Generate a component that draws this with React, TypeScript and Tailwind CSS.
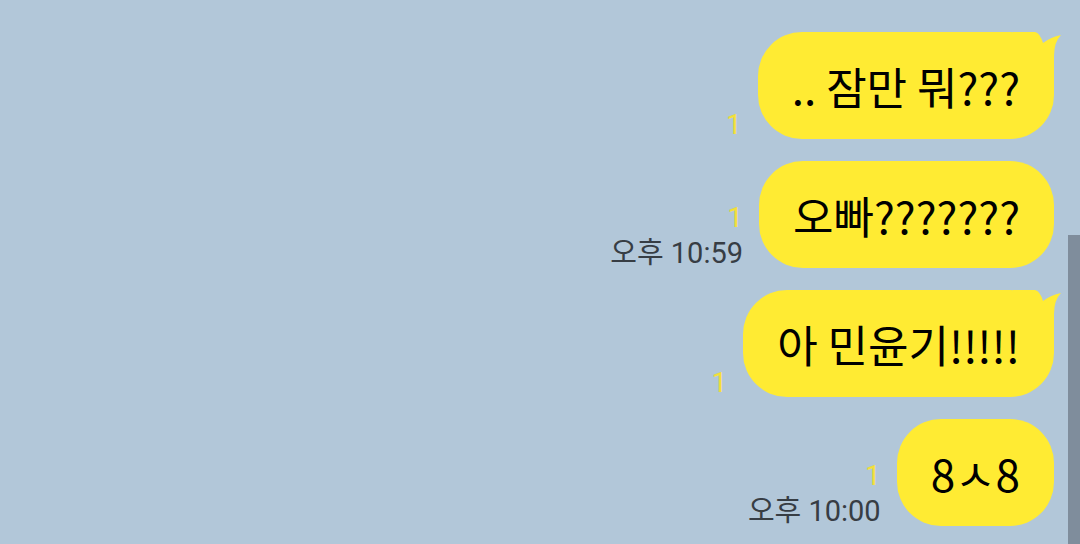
import React from 'react';

interface Message {
  text: string;
  tail?: boolean;
  time?: string;
}

const messages: Message[] = [
  { text: '.. 잠만 뭐???', tail: true },
  { text: '오빠???????', time: '오후 10:59' },
  { text: '아 민윤기!!!!!', tail: true },
  { text: '8ㅅ8', time: '오후 10:00' },
];

// little horn on the top right corner of a bubble
function Tail() {
  return (
    <svg
      className="absolute -right-[8px] top-0"
      width="49"
      height="48"
      viewBox="0 0 49 48"
    >
      <path
        d="M0 0 H22 Q27 1 30 11 Q38 5 48 3 Q41 10 41 24 V48 H0 Z"
        fill="#ffeb33"
      />
    </svg>
  );
}

function Bubble({ text, tail, time }: Message) {
  return (
    <div className="flex items-end gap-[16px]">
      <div className="flex flex-col items-end">
        <span
          className={`text-[28px] leading-[28px] text-[#f2df3a] ${time ? 'mb-[7px]' : ''}`}
          style={{ fontFamily: 'Roboto, sans-serif' }}
        >
          1
        </span>
        {time && (
          <span
            className="text-[29px] leading-[29px] text-[#373d44]"
            style={{ fontFamily: "Roboto, 'Noto Sans CJK KR', sans-serif" }}
          >
            {time}
          </span>
        )}
      </div>
      <div className="relative flex h-[107px] items-center rounded-[44px] bg-[#ffeb33] px-[34px]">
        {tail && <Tail />}
        <span
          className="relative text-[44px] leading-none text-black"
          style={{ fontFamily: "'Noto Sans CJK KR', sans-serif" }}
        >
          {text}
        </span>
      </div>
    </div>
  );
}

export default function App() {
  return (
    <div className="relative h-[544px] w-full overflow-hidden bg-[#b2c7d9]">
      <div className="flex flex-col items-end gap-[22px] pr-[26px] pt-[32px]">
        {messages.map((m, i) => (
          <Bubble key={i} {...m} />
        ))}
      </div>
      {/* scrollbar */}
      <div className="absolute right-0 top-[235px] h-[309px] w-[12px] bg-[#7f8d9c]" />
    </div>
  );
}
